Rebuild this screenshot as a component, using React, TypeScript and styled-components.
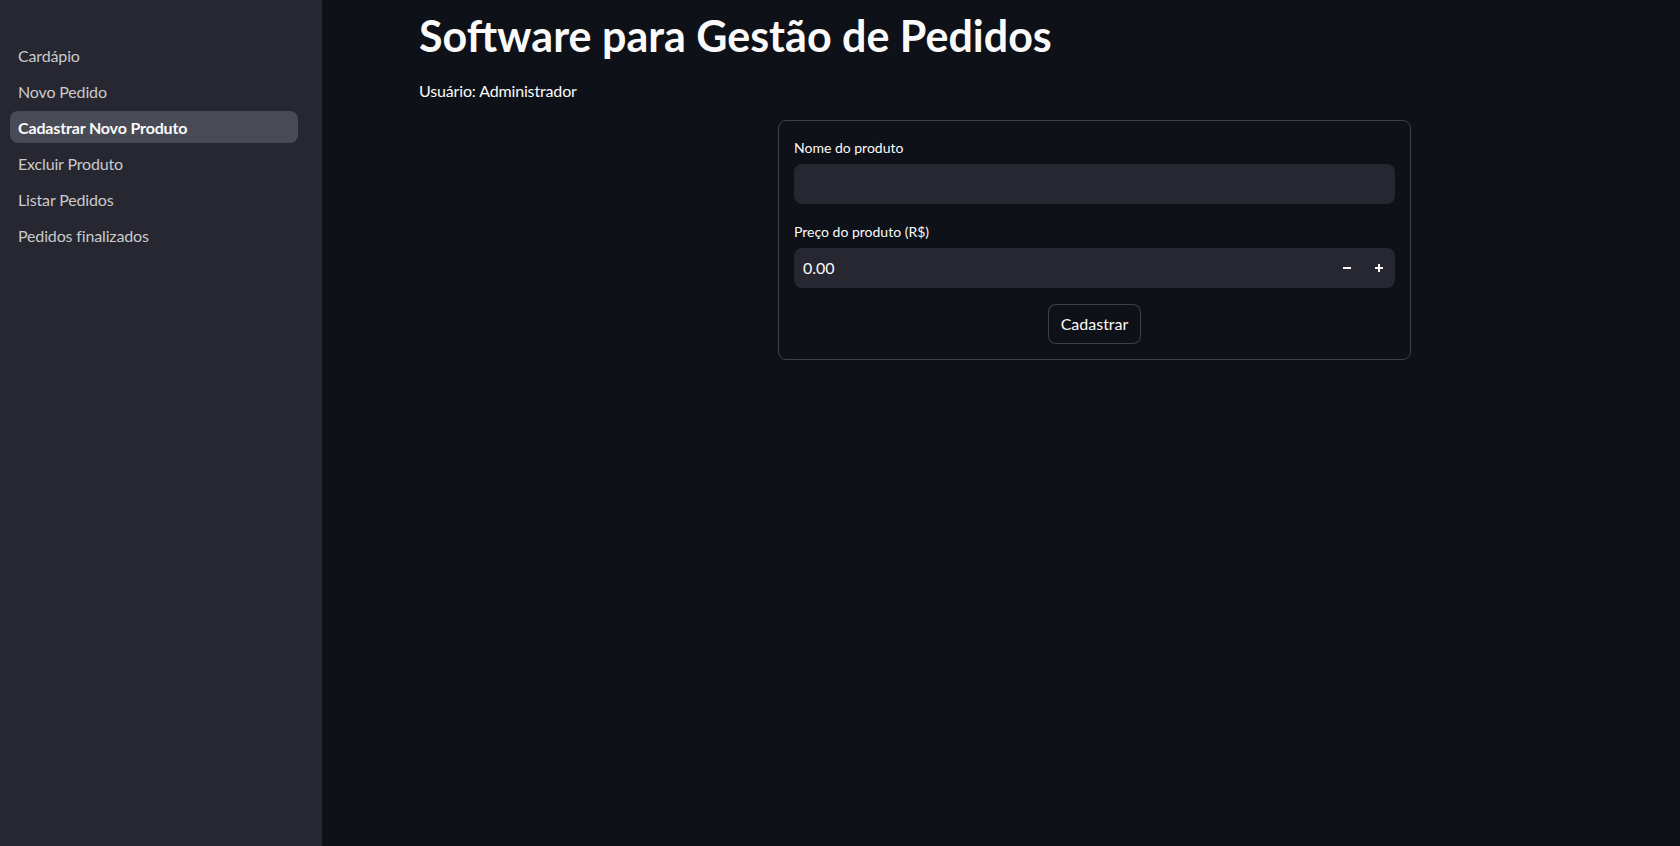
import React from "react";
import styled, { createGlobalStyle } from "styled-components";

const GlobalStyle = createGlobalStyle`
  html, body {
    margin: 0;
    padding: 0;
    background: #0e1117;
  }
  body {
    font-family: Lato, "Noto Sans", sans-serif;
    color: #fafafa;
  }
  * { box-sizing: border-box; }
`;

const Shell = styled.div`
  display: flex;
  width: 1680px;
  height: 846px;
  overflow: hidden;
  background: #0e1117;
`;

const Sidebar = styled.nav`
  width: 322px;
  flex-shrink: 0;
  background: #262730;
  padding: 39px 24px 0 10px;
  display: flex;
  flex-direction: column;
  gap: 4px;
`;

const NavItem = styled.div<{ $active?: boolean }>`
  height: 32px;
  display: flex;
  align-items: center;
  padding-left: 8px;
  border-radius: 8px;
  font-size: 16px;
  letter-spacing: -0.15px;
  font-weight: ${(p) => (p.$active ? 700 : 400)};
  color: ${(p) => (p.$active ? "#fafafa" : "rgba(250,250,250,0.78)")};
  background: ${(p) => (p.$active ? "#484a56" : "transparent")};
`;

const Main = styled.main`
  flex: 1;
  padding: 10px 97px 0 97px;
  display: flex;
  flex-direction: column;
`;

const Title = styled.h1`
  margin: 0;
  font-size: 43px;
  font-weight: 700;
  line-height: 1.2;
  color: #fafafa;
`;

const UserLine = styled.p`
  margin: 17px 0 0 0;
  font-size: 16px;
  letter-spacing: -0.15px;
  line-height: 24px;
  color: #fafafa;
`;

const Columns = styled.div`
  display: grid;
  grid-template-columns: 343px 633px 1fr;
  column-gap: 16px;
  margin-top: 17px;
`;

const FormBox = styled.form`
  grid-column: 2;
  border: 1px solid rgba(250, 250, 250, 0.2);
  border-radius: 8px;
  padding: 16px 15px 15px 15px;
  display: flex;
  flex-direction: column;
`;

const Field = styled.div<{ $gapTop?: boolean }>`
  display: flex;
  flex-direction: column;
  gap: 6px;
  margin-top: ${(p) => (p.$gapTop ? "17px" : "0")};
`;

const Label = styled.label`
  font-size: 14px;
  line-height: 21px;
  color: #fafafa;
`;

const InputWrap = styled.div`
  height: 40px;
  background: #262730;
  border-radius: 8px;
  display: flex;
  align-items: center;
`;

const TextInput = styled.input`
  flex: 1;
  height: 100%;
  border: none;
  outline: none;
  background: transparent;
  color: #fafafa;
  font-family: inherit;
  font-size: 16px;
  padding: 0 9px;
`;

const StepButton = styled.button`
  width: 32px;
  height: 40px;
  border: none;
  background: transparent;
  color: #fafafa;
  display: flex;
  align-items: center;
  justify-content: center;
  padding: 0;
`;

const ButtonRow = styled.div`
  display: flex;
  justify-content: center;
  margin-top: 16px;
`;

const SubmitButton = styled.button`
  height: 40px;
  padding: 0 12px;
  border: 1px solid rgba(250, 250, 250, 0.2);
  border-radius: 8px;
  background: #0e1117;
  color: #fafafa;
  font-family: inherit;
  font-size: 16px;
`;

const Minus = () => (
  <svg width="10" height="10" viewBox="0 0 10 10">
    <rect x="1" y="4" width="8" height="2" fill="#fafafa" />
  </svg>
);

const Plus = () => (
  <svg width="10" height="10" viewBox="0 0 10 10">
    <rect x="1" y="4" width="8" height="2" fill="#fafafa" />
    <rect x="4" y="1" width="2" height="8" fill="#fafafa" />
  </svg>
);

const navItems = [
  "Cardápio",
  "Novo Pedido",
  "Cadastrar Novo Produto",
  "Excluir Produto",
  "Listar Pedidos",
  "Pedidos finalizados",
];

export default function App() {
  return (
    <>
      <GlobalStyle />
      <Shell>
        <Sidebar>
          {navItems.map((item) => (
            <NavItem key={item} $active={item === "Cadastrar Novo Produto"}>
              {item}
            </NavItem>
          ))}
        </Sidebar>
        <Main>
          <Title>Software para Gestão de Pedidos</Title>
          <UserLine>Usuário: Administrador</UserLine>
          <Columns>
            <FormBox onSubmit={(e) => e.preventDefault()}>
              <Field>
                <Label>Nome do produto</Label>
                <InputWrap>
                  <TextInput type="text" />
                </InputWrap>
              </Field>
              <Field $gapTop>
                <Label>Preço do produto (R$)</Label>
                <InputWrap>
                  <TextInput type="text" defaultValue="0.00" />
                  <StepButton type="button">
                    <Minus />
                  </StepButton>
                  <StepButton type="button">
                    <Plus />
                  </StepButton>
                </InputWrap>
              </Field>
              <ButtonRow>
                <SubmitButton type="submit">Cadastrar</SubmitButton>
              </ButtonRow>
            </FormBox>
          </Columns>
        </Main>
      </Shell>
    </>
  );
}
